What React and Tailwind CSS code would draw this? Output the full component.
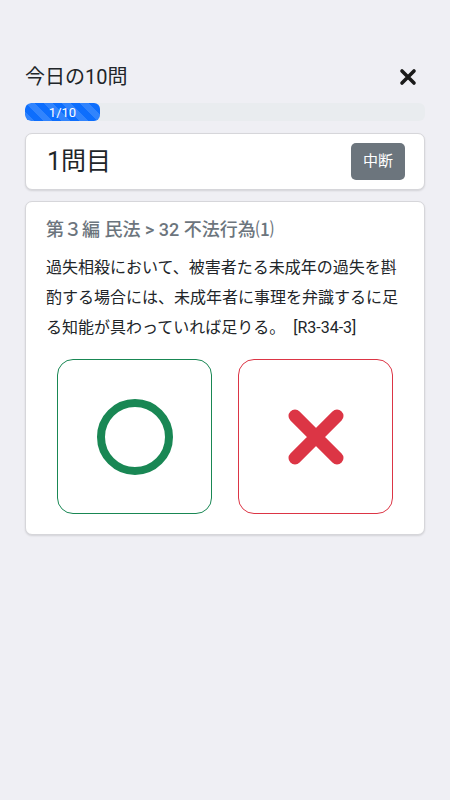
import React from "react";

const font = { fontFamily: 'Roboto, "Noto Sans CJK JP", "Noto Sans", sans-serif' };

export default function App() {
  return (
    <div className="min-h-[800px] w-full bg-[#efeff4] px-[25px] pt-[62px]" style={font}>
      {/* header */}
      <div className="flex h-[30px] items-center justify-between">
        <h1 className="text-[20px] font-normal text-[#212529]">今日の10問</h1>
        <svg width="18" height="18" viewBox="0 0 18 18" className="mr-[8px]">
          <path d="M3 3 L15 15 M15 3 L3 15" stroke="#1a1a1a" strokeWidth="3.6" strokeLinecap="round" />
        </svg>
      </div>

      {/* progress */}
      <div className="mt-[11px] h-[18px] w-full overflow-hidden rounded-[6px] bg-[#e9ecef]">
        <div
          className="flex h-full w-[75px] items-center justify-center rounded-[6px] bg-[#0d6efd] text-[13px] leading-none text-white"
          style={{
            backgroundImage:
              "linear-gradient(45deg, rgba(255,255,255,.15) 25%, transparent 25%, transparent 50%, rgba(255,255,255,.15) 50%, rgba(255,255,255,.15) 75%, transparent 75%, transparent)",
            backgroundSize: "18px 18px",
          }}
        >
          1/10
        </div>
      </div>

      {/* question number */}
      <div className="mt-[12px] flex h-[57px] items-center justify-between rounded-[7px] border border-[#d6d6da] bg-white pl-[21px] pr-[19px] shadow-[0_1px_2px_rgba(0,0,0,0.12)]">
        <span className="text-[25px] text-[#212529]">1問目</span>
        <button className="flex h-[37px] w-[54px] items-center justify-center rounded-[5px] bg-[#6c757d] text-[15px] text-white">
          中断
        </button>
      </div>

      {/* question card */}
      <div className="mt-[11px] rounded-[7px] border border-[#d6d6da] bg-white px-[20px] pb-[20px] pt-[14px] shadow-[0_1px_2px_rgba(0,0,0,0.12)]">
        <h2 className="text-[18px] font-medium leading-[28px] text-[#6c757d]">
          第３編 民法 &gt; 32 不法行為⑴
        </h2>
        <p className="mt-[9px] text-[16px] leading-[30px] text-[#212529]">
          過失相殺において、被害者たる未成年の過失を斟酌する場合には、未成年者に事理を弁識するに足る知能が具わっていれば足りる。&nbsp; [R3-34-3]
        </p>
        <div className="mt-[16px] flex justify-center gap-[26px]">
          <button className="flex h-[155px] w-[155px] items-center justify-center rounded-[16px] border border-[#198754] bg-white">
            <svg width="80" height="80" viewBox="0 0 80 80">
              <circle cx="40" cy="40" r="34" fill="none" stroke="#198754" strokeWidth="8" />
            </svg>
          </button>
          <button className="flex h-[155px] w-[155px] items-center justify-center rounded-[16px] border border-[#dc3545] bg-white">
            <svg width="60" height="60" viewBox="0 0 60 60">
              <path d="M9 9 L51 51 M51 9 L9 51" stroke="#dc3545" strokeWidth="13" strokeLinecap="round" strokeLinejoin="round" />
            </svg>
          </button>
        </div>
      </div>
    </div>
  );
}
